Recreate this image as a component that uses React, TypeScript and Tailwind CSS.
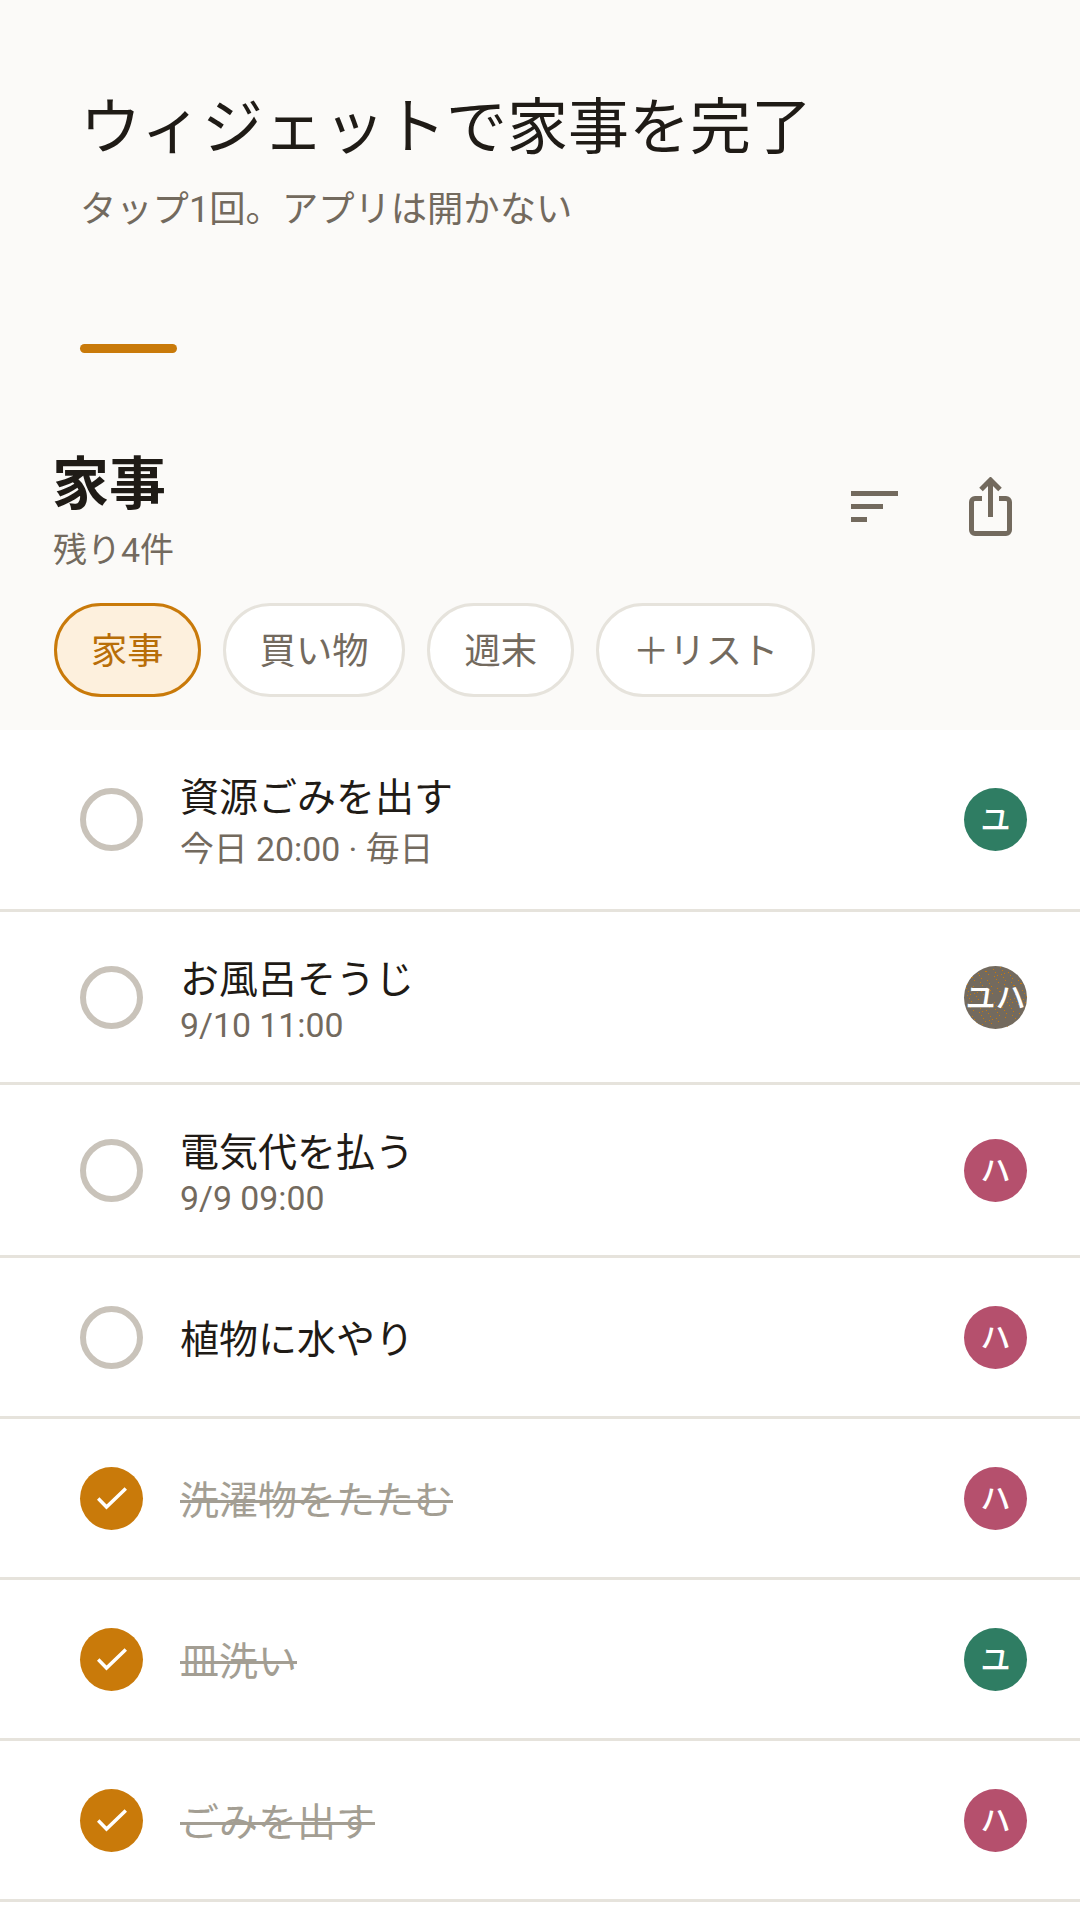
// App.tsx
type Task = {
  title: string
  sub?: string
  who: string
  done?: boolean
  rowClass: string
  titleClass: string
  subClass?: string
}

const tasks: Task[] = [
  { title: "資源ごみを出す", sub: "今日 20:00 · 毎日", who: "ユ", rowClass: "h-[182px]", titleClass: "leading-[60px]", subClass: "leading-[44px]" },
  { title: "お風呂そうじ", sub: "9/10 11:00", who: "ユハ", rowClass: "h-[173px]", titleClass: "leading-[56px]", subClass: "leading-[35px]" },
  { title: "電気代を払う", sub: "9/9 09:00", who: "ハ", rowClass: "h-[173px]", titleClass: "leading-[56px]", subClass: "leading-[35px]" },
  { title: "植物に水やり", who: "ハ", rowClass: "h-[161px]", titleClass: "leading-[50px] pt-[5px]" },
  { title: "洗濯物をたたむ", who: "ハ", done: true, rowClass: "h-[161px]", titleClass: "leading-[50px] pt-[5px]" },
  { title: "皿洗い", who: "ユ", done: true, rowClass: "h-[161px]", titleClass: "leading-[50px] pt-[5px]" },
  { title: "ごみを出す", who: "ハ", done: true, rowClass: "h-[161px]", titleClass: "leading-[50px] pt-[5px]" },
]

const chips = ["家事", "買い物", "週末", "＋リスト"]

const avatarColor = (who: string) => {
  if (who === "ユ") return "bg-[#2f7d63]"
  if (who === "ハ") return "bg-[#b5506d]"
  return "bg-[#736a5e]"
}

// the shared avatar has an orange speckle over its brown fill
const specks = Array.from({ length: 150 }, (_, i) => ({
  x: (i * 37 + (i % 7) * 11) % 63,
  y: (i * 23 + (i % 5) * 13) % 63,
}))

const SortIcon = () => (
  <svg width="47" height="31" viewBox="0 0 47 31" className="block">
    <rect x="0" y="0" width="47" height="5" fill="#736a5e" />
    <rect x="0" y="13" width="32" height="5" fill="#736a5e" />
    <rect x="0" y="26" width="16" height="5" fill="#736a5e" />
  </svg>
)

const ShareIcon = () => (
  <svg width="43" height="59" viewBox="0 0 43 59" fill="none" className="block">
    <path
      d="M13 21.500H6a3.500 3.500 0 0 0-3.500 3.500v28a3.500 3.500 0 0 0 3.500 3.500h31a3.500 3.500 0 0 0 3.500-3.500V25a3.500 3.500 0 0 0-3.500-3.500h-7"
      stroke="#736a5e"
      strokeWidth="5"
    />
    <path d="M21.500 40V3" stroke="#736a5e" strokeWidth="5" />
    <path d="M12 12.500 21.500 3 31 12.500" stroke="#736a5e" strokeWidth="5" />
  </svg>
)

const App = () => {
  return (
    <div className="w-[1080px] h-[1920px] overflow-hidden bg-white font-['Roboto','Noto_Sans_CJK_JP',sans-serif]">
      <div className="h-[730px] bg-[#fbfaf8]">
        <div className="px-20 pt-[88px]">
          <h1 className="text-[61px] leading-[80px] text-[#1f1b16] font-normal">ウィジェットで家事を完了</h1>
          <p className="text-[36.3px] leading-[44px] mt-[20px] text-[#736a5e]">タップ1回。アプリは開かない</p>
          <div className="w-[97px] h-[9px] mt-[112px] rounded-full bg-[#c97a0a]"></div>
        </div>

        <div className="flex justify-between px-[54px] mt-[97px]">
          <div>
            <h2 className="text-[57px] leading-[70px] font-bold text-[#1f1b16] ml-[-2px]">家事</h2>
            <p className="text-[34px] leading-[44px] mt-[8px] text-[#736a5e] ml-[-1px]">残り4件</p>
          </div>
          <div className="flex items-start gap-[71px] pt-[27px] pr-[14px]">
            <div className="pt-[14px]">
              <SortIcon />
            </div>
            <ShareIcon />
          </div>
        </div>

        <div className="flex gap-[22px] px-[54px] mt-[31px]">
          {chips.map((chip, idx) => (
            <div
              key={chip}
              className={
                idx === 0
                  ? "h-[94px] px-[34px] pt-[5px] flex items-center rounded-full border-[3px] border-[#c97a0a] bg-[#fdf0dd] text-[36.3px] text-[#b86e08]"
                  : "h-[94px] px-[34px] pt-[5px] flex items-center rounded-full border-[3px] border-[#e6e3dc] bg-white text-[36.3px] text-[#736a5e]"
              }
            >
              {chip}
            </div>
          ))}
        </div>
      </div>

      <div>
        {tasks.map((task) => (
          <div
            key={task.title}
            className={`${task.rowClass} flex items-center pl-20 pr-[53px] border-b-[3px] border-[#e6e3dc]`}
          >
            {task.done ? (
              <div className="w-[63px] h-[63px] rounded-full bg-[#c97a0a] flex items-center justify-center shrink-0">
                <svg width="30" height="23" viewBox="0 0 30 23" fill="none">
                  <path d="M1.200 11.500 9.500 20 28.800 1.500" stroke="white" strokeWidth="3.500" />
                </svg>
              </div>
            ) : (
              <div className="w-[63px] h-[63px] rounded-full border-[6px] border-[#c9c3ba] shrink-0"></div>
            )}
            <div className="flex-1 ml-[37px]">
              <div
                className={
                  task.done
                    ? `${task.titleClass} text-[39px] text-[#a39e93] line-through`
                    : `${task.titleClass} text-[39px] text-[#1f1b16]`
                }
              >
                {task.title}
              </div>
              {task.sub && <div className={`${task.subClass} text-[33.8px] text-[#736a5e]`}>{task.sub}</div>}
            </div>
            <div
              className={`${avatarColor(task.who)} relative overflow-hidden w-[63px] h-[63px] rounded-full flex items-center justify-center shrink-0 text-[30px] text-white font-medium whitespace-nowrap`}
            >
              {task.who === "ユハ" && (
                <svg width="63" height="63" viewBox="0 0 63 63" className="absolute inset-0">
                  {specks.map((s, i) => (
                    <rect key={i} x={s.x} y={s.y} width="1" height="1" fill="#c97a0a" />
                  ))}
                </svg>
              )}
              <span className="relative">{task.who}</span>
            </div>
          </div>
        ))}
      </div>
    </div>
  )
}

export default App
